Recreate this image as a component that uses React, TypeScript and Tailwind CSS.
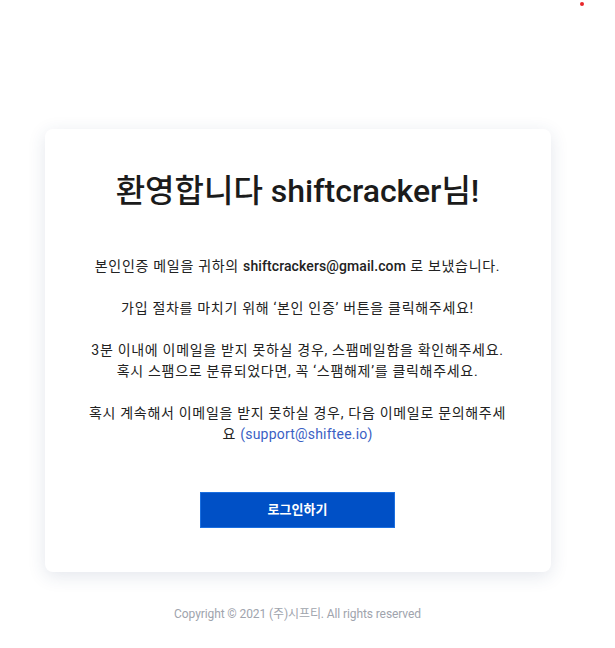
import React from "react";

export default function App() {
  const font = { fontFamily: 'Roboto, "Noto Sans CJK KR", sans-serif' };
  return (
    <div className="relative w-[615px] h-[648px] bg-white" style={font}>
      <span className="absolute left-[580px] top-[2px] w-[4px] h-[4px] rounded-full bg-[#e8262a]" />
      <div className="w-[595px] pt-[129px] flex flex-col items-center">
        <div className="w-[506px] rounded-[8px] bg-white shadow-[0_4px_18px_rgba(40,60,110,0.13)] pt-[43px] pb-[44px] px-[36px] flex flex-col items-center">
          <h1 className="text-[32px] leading-[38px] font-medium text-[#1b1b1b] tracking-[0px]">
            환영합니다 shiftcracker님!
          </h1>
          <div className="mt-[46px] text-[14px] leading-[21px] text-[#222] text-center flex flex-col gap-[21px] tracking-[0.7px]">
            <p>
              본인인증 메일을 귀하의 <span className="font-medium tracking-[0.1px]">shiftcrackers@gmail.com</span> 로 보냈습니다.
            </p>
            <p>가입 절차를 마치기 위해 ‘본인 인증’ 버튼을 클릭해주세요!</p>
            <p>
              3분 이내에 이메일을 받지 못하실 경우, 스팸메일함을 확인해주세요.
              <br />
              혹시 스팸으로 분류되었다면, 꼭 ‘스팸해제’를 클릭해주세요.
            </p>
            <p>
              혹시 계속해서 이메일을 받지 못하실 경우, 다음 이메일로 문의해주세
              <br />
              요 <span className="text-[#3b5fc4] tracking-[0.2px]">(support@shiftee.io)</span>
            </p>
          </div>
          <button className="mt-[47px] w-[195px] h-[36px] bg-[#0050c6] border border-[#1b6fe0] text-white text-[13px] font-bold">
            로그인하기
          </button>
        </div>
        <p className="mt-[34px] text-[12px] leading-[16px] text-[#a0a4ad] tracking-[-0.1px]">
          Copyright © 2021 (주)시프티. All rights reserved
        </p>
      </div>
    </div>
  );
}
